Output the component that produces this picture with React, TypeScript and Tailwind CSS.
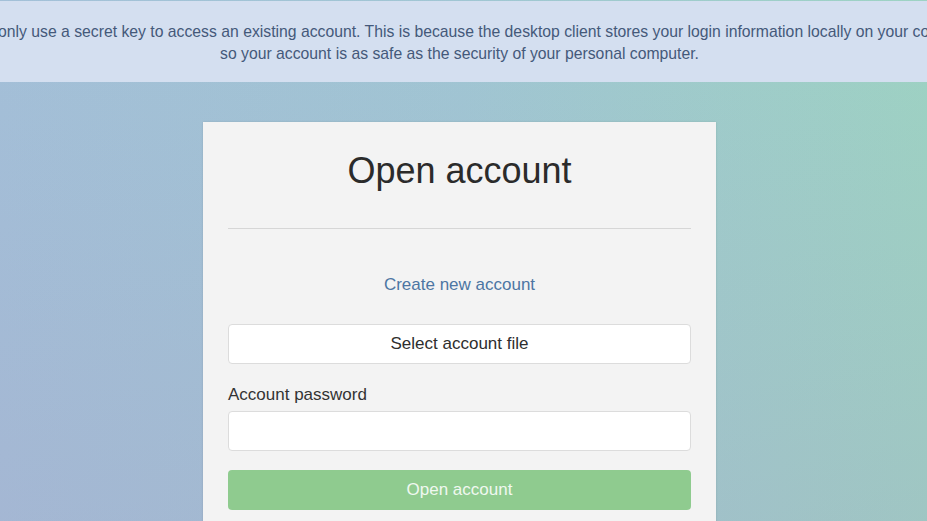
import React from "react";

export default function App() {
  return (
    <div
      className="h-screen w-full overflow-hidden flex flex-col bg-[linear-gradient(to_bottom,rgba(0,0,0,0)_0%,rgba(168,150,195,0.22)_100%),linear-gradient(to_right,#a3c0d8_0%,#a0c6d3_50%,#9dd3c3_100%)]"
      style={{ fontFamily: '"Liberation Sans", Arial, sans-serif' }}
    >
      <div className="mt-px w-full h-[81px] shrink-0 bg-[#d4dff0] flex flex-col items-center justify-center overflow-hidden pt-[2px] text-[15.75px] leading-[22px] text-[#44597a]">
        <div className="w-full flex justify-center pr-[8px]">
          <span className="whitespace-nowrap shrink-0">
            You can only use a secret key to access an existing account. This is because the desktop client stores your login information locally on your computer,
          </span>
        </div>
        <div className="w-full flex justify-center pr-[8px]">
          <span className="whitespace-nowrap shrink-0">
            so your account is as safe as the security of your personal computer.
          </span>
        </div>
      </div>

      <div className="flex justify-center pt-[40px] pr-[8px]">
        <div className="w-[513px] shrink-0 bg-[#f3f3f3] shadow-[0_0_2px_rgba(0,0,0,0.12)] px-[25px] pt-[29px] pb-[60px]">
          <h1 className="text-center text-[36px] leading-[40px] text-[#2b2b2b]">Open account</h1>
          <div className="mt-[37px] h-px bg-[#d6d6d6]" />
          <div className="mt-[44px] text-center text-[17px] leading-[24px] text-[#4d76a3]">
            Create new account
          </div>
          <button className="mt-[27px] w-full h-[40px] bg-white border border-[#dcdcdc] rounded-[4px] text-[17px] text-[#2e2e2e] flex items-center justify-center">
            Select account file
          </button>
          <div className="mt-[19px] text-[17px] leading-[24px] text-[#333333]">Account password</div>
          <div className="mt-[4px] w-full h-[40px] bg-white border border-[#dcdcdc] rounded-[4px]" />
          <button className="mt-[19px] w-full h-[40px] bg-[#8fcb8f] rounded-[4px] text-[17px] text-[#f0f8f0] flex items-center justify-center">
            Open account
          </button>
        </div>
      </div>
    </div>
  );
}
